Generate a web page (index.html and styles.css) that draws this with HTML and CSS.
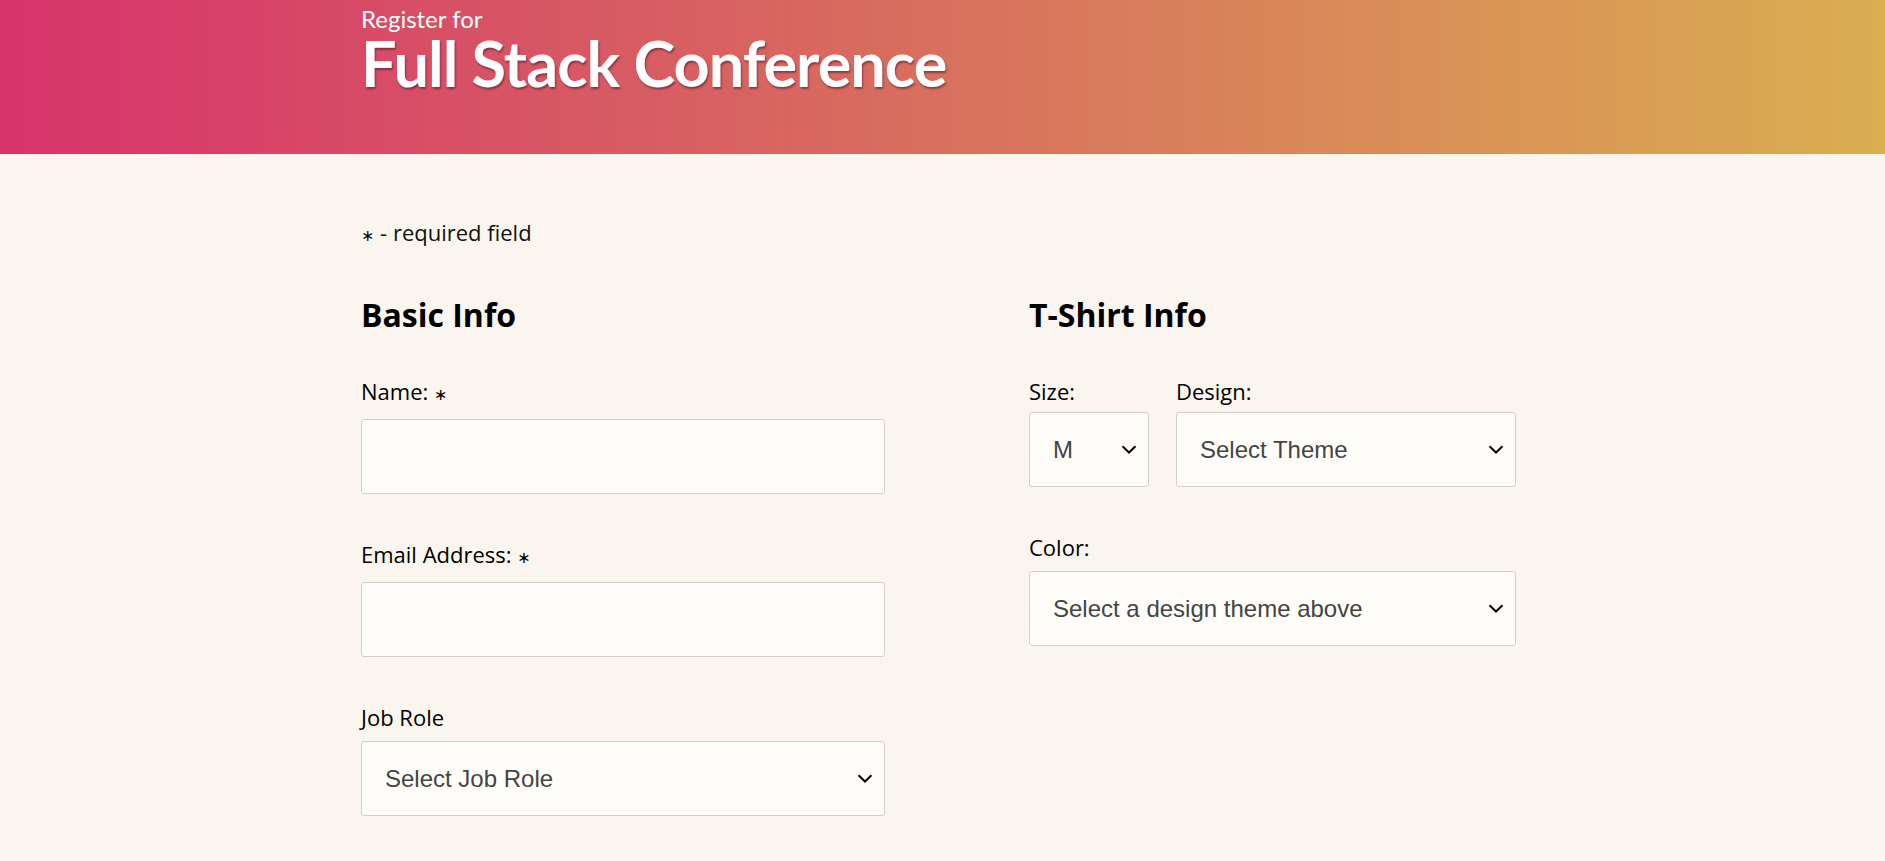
FILE: index.html
```html
<!DOCTYPE html>
<html lang="en">
<head>
<meta charset="utf-8">
<title>Full Stack Conference</title>
<link rel="stylesheet" href="styles.css">
</head>
<body>
<header class="banner">
  <div class="container">
    <p class="pre">Register for</p>
    <h1 class="title">Full Stack Conference</h1>
  </div>
</header>
<main class="container">
  <p class="note"><span class="req">∗</span> - required field</p>
  <form class="grid">
    <fieldset class="col">
      <h2 class="heading">Basic Info</h2>
      <div class="field first">
        <label class="label" for="name">Name: <span class="req">∗</span></label>
        <input class="text-input" id="name" type="text">
      </div>
      <div class="field">
        <label class="label" for="email">Email Address: <span class="req">∗</span></label>
        <input class="text-input" id="email" type="email">
      </div>
      <div class="field">
        <label class="label" for="title">Job Role</label>
        <div class="select-wrap">
          <select class="select" id="title"><option>Select Job Role</option></select>
          <svg class="chev" width="16" height="9" viewBox="0 0 16 9"><path d="M1.5 1.2 L8 7.5 L14.5 1.2" fill="none" stroke="#000" stroke-width="2"/></svg>
        </div>
      </div>
    </fieldset>
    <fieldset class="col">
      <h2 class="heading">T-Shirt Info</h2>
      <div class="row first">
        <div class="size">
          <label class="label" for="size">Size:</label>
          <div class="select-wrap tight">
            <select class="select" id="size"><option>M</option></select>
            <svg class="chev" width="16" height="9" viewBox="0 0 16 9"><path d="M1.5 1.2 L8 7.5 L14.5 1.2" fill="none" stroke="#000" stroke-width="2"/></svg>
          </div>
        </div>
        <div class="design">
          <label class="label" for="design">Design:</label>
          <div class="select-wrap tight">
            <select class="select" id="design"><option>Select Theme</option></select>
            <svg class="chev" width="16" height="9" viewBox="0 0 16 9"><path d="M1.5 1.2 L8 7.5 L14.5 1.2" fill="none" stroke="#000" stroke-width="2"/></svg>
          </div>
        </div>
      </div>
      <div class="field">
        <label class="label" for="color">Color:</label>
        <div class="select-wrap">
          <select class="select" id="color"><option>Select a design theme above</option></select>
          <svg class="chev" width="16" height="9" viewBox="0 0 16 9"><path d="M1.5 1.2 L8 7.5 L14.5 1.2" fill="none" stroke="#000" stroke-width="2"/></svg>
        </div>
      </div>
    </fieldset>
  </form>
</main>
</body>
</html>
```
FILE: styles.css
```css
* { box-sizing: border-box; }
html, body {
  margin: 0;
  padding: 0;
}
body {
  background: #faf6ef;
  color: #111;
  font-family: "Open Sans", "Noto Sans", sans-serif;
  overflow: hidden;
}
.container {
  width: 1163px;
  margin: 0 auto;
}
.banner {
  height: 154px;
  padding-top: 7px;
  background: linear-gradient(90deg, #d7336c 0%, #d8705e 50%, #daae51 100%);
  color: #fff;
  font-family: "Lato", "Open Sans", sans-serif;
}
.pre {
  margin: 0;
  font-size: 24px;
  line-height: 24px;
  font-weight: 400;
}
.title {
  margin: 4px 0 0;
  font-size: 63px;
  line-height: 56px;
  font-weight: 700;
  letter-spacing: -1px;
  text-shadow: 1px 2px 2px rgba(60, 0, 20, 0.45);
}
.note {
  margin: 65px 0 0;
  font-size: 22px;
  line-height: 26px;
}
.req {
  font-family: "DejaVu Sans", sans-serif;
  font-size: 16px;
  line-height: 1;
}
.grid {
  display: grid;
  grid-template-columns: 524px 487px;
  column-gap: 144px;
  margin-top: 50px;
}
.col {
  border: 0;
  margin: 0;
  padding: 0;
  min-width: 0;
}
.heading {
  margin: 0;
  font-size: 32px;
  line-height: 40px;
  font-weight: 700;
  color: #000;
}
.field { margin-top: 47px; }
.field.first, .row.first { margin-top: 43px; }
.label {
  display: block;
  font-size: 22px;
  line-height: 26px;
  color: #000;
}
.text-input {
  display: block;
  width: 100%;
  height: 75px;
  margin-top: 15px;
  border: 1px solid #d3cec6;
  border-radius: 3px;
  background: #fffdf9;
  font-size: 24px;
}
.select-wrap {
  position: relative;
  margin-top: 11px;
}
.select-wrap.tight { margin-top: 8px; }
.select {
  display: block;
  width: 100%;
  height: 75px;
  padding: 0 40px 0 23px;
  border: 1px solid #d3cec6;
  border-radius: 3px;
  background: #fffdf9;
  font-family: "Liberation Sans", Arial, sans-serif;
  font-size: 24px;
  color: #444;
  appearance: none;
  -webkit-appearance: none;
}
.chev {
  position: absolute;
  right: 12px;
  top: 33px;
  pointer-events: none;
}
.row {
  display: flex;
  gap: 27px;
}
.size { width: 120px; }
.design { width: 340px; }
```
